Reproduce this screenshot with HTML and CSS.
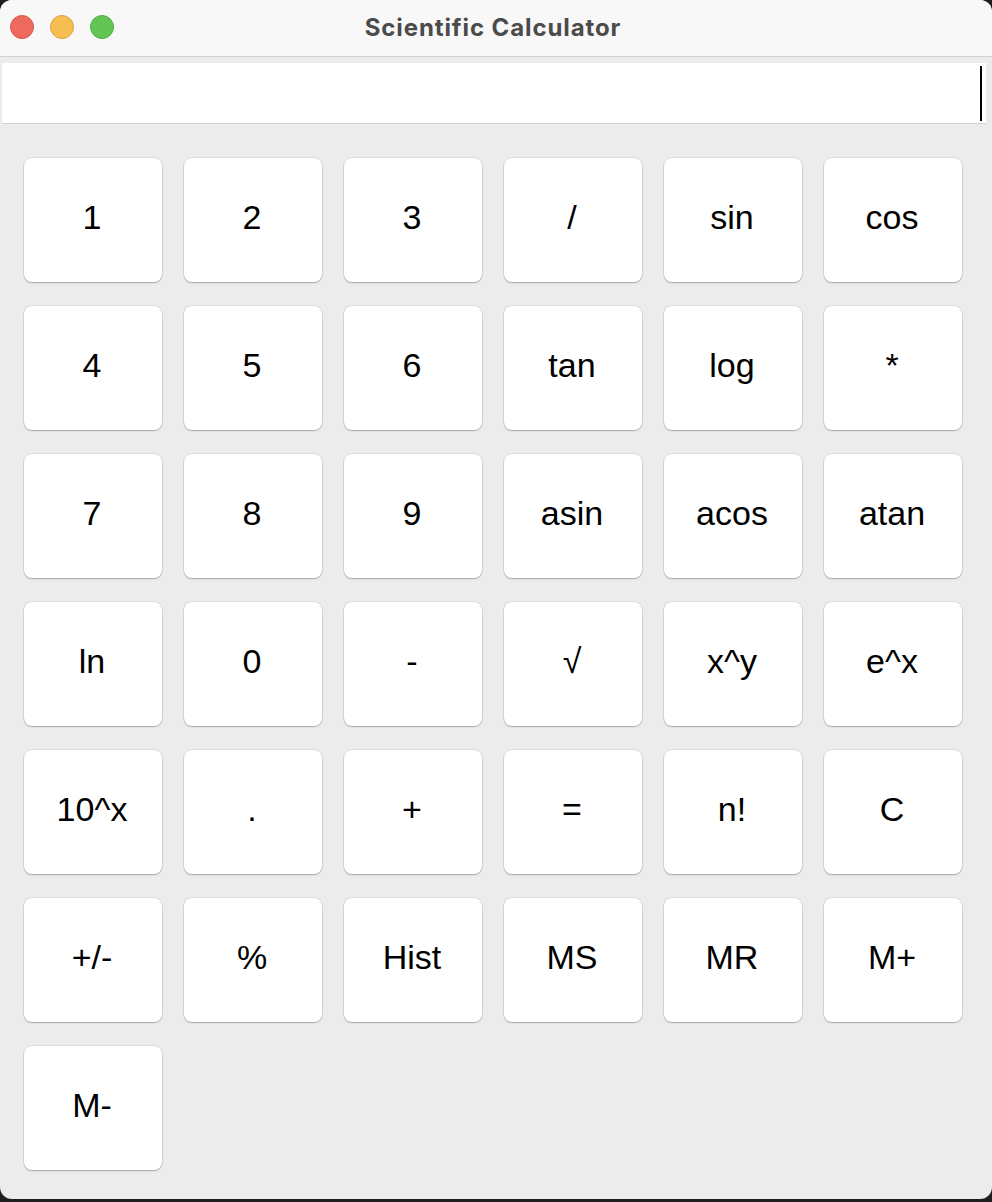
FILE: index.html
```html
<!DOCTYPE html>
<html lang="en">
<head>
<meta charset="utf-8">
<title>Scientific Calculator</title>
<link rel="stylesheet" href="styles.css">
</head>
<body>
<div class="window">
  <div class="titlebar">
    <div class="lights">
      <span class="light red"></span>
      <span class="light yellow"></span>
      <span class="light green"></span>
    </div>
    <div class="title">Scientific Calculator</div>
  </div>
  <div class="content">
    <div class="display"><span class="caret"></span></div>
    <div class="keys">
      <button class="key">1</button>
      <button class="key">2</button>
      <button class="key">3</button>
      <button class="key">/</button>
      <button class="key">sin</button>
      <button class="key">cos</button>
      <button class="key">4</button>
      <button class="key">5</button>
      <button class="key">6</button>
      <button class="key">tan</button>
      <button class="key">log</button>
      <button class="key">*</button>
      <button class="key">7</button>
      <button class="key">8</button>
      <button class="key">9</button>
      <button class="key">asin</button>
      <button class="key">acos</button>
      <button class="key">atan</button>
      <button class="key">ln</button>
      <button class="key">0</button>
      <button class="key">-</button>
      <button class="key">√</button>
      <button class="key">x^y</button>
      <button class="key">e^x</button>
      <button class="key">10^x</button>
      <button class="key">.</button>
      <button class="key">+</button>
      <button class="key">=</button>
      <button class="key">n!</button>
      <button class="key">C</button>
      <button class="key">+/-</button>
      <button class="key">%</button>
      <button class="key">Hist</button>
      <button class="key">MS</button>
      <button class="key">MR</button>
      <button class="key">M+</button>
      <button class="key">M-</button>
    </div>
  </div>
</div>
</body>
</html>
```
FILE: styles.css
```css
html, body {
  margin: 0;
  padding: 0;
  background: #1f1f1f;
}
body {
  width: 992px;
  height: 1202px;
  overflow: hidden;
}
.window {
  width: 992px;
  height: 1199px;
  background: #ececec;
  border-radius: 12px;
  overflow: hidden;
  display: flex;
  flex-direction: column;
}
.titlebar {
  height: 56px;
  flex: none;
  background: #f8f8f8;
  border-bottom: 1px solid #d2d2d2;
  display: flex;
  align-items: center;
  position: relative;
}
.lights {
  display: flex;
  gap: 16px;
  padding-left: 10px;
  margin-top: -2px;
}
.light {
  width: 22px;
  height: 22px;
  border-radius: 50%;
  border: 1px solid rgba(0,0,0,0.12);
}
.red { background: #ee6a5f; border-color: #d5574d; }
.yellow { background: #f6be50; border-color: #dba13f; }
.green { background: #62c554; border-color: #4fae43; }
.title {
  position: absolute;
  left: 0;
  right: 0;
  top: 13px;
  text-align: center;
  font-family: Inter, "Liberation Sans", sans-serif;
  font-weight: 700;
  font-size: 24px;
  letter-spacing: 0.9px;
  color: #4b4b4b;
  padding-right: 6px;
}
.content {
  flex: 1;
  display: flex;
  flex-direction: column;
}
.display {
  margin: 6px 6px 0 2px;
  height: 60px;
  background: #ffffff;
  border-bottom: 1px solid #d3d3d3;
  display: flex;
  justify-content: flex-end;
  align-items: center;
}
.caret {
  width: 2px;
  height: 55px;
  background: #000;
  margin-right: 4px;
}
.keys {
  margin-top: 34px;
  padding: 0 30px 0 24px;
  display: grid;
  grid-template-columns: repeat(6, 138px);
  grid-auto-rows: 124px;
  column-gap: 22px;
  row-gap: 24px;
}
.key {
  margin: 0;
  padding: 0 2px 5px 0;
  border: none;
  background: #ffffff;
  border-radius: 8px;
  box-shadow: 0 0 0 0.5px rgba(0,0,0,0.12), 0 1px 1.5px rgba(0,0,0,0.25);
  font-family: "Liberation Sans", Arial, sans-serif;
  font-size: 34px;
  color: #000;
  display: flex;
  align-items: center;
  justify-content: center;
}
```
